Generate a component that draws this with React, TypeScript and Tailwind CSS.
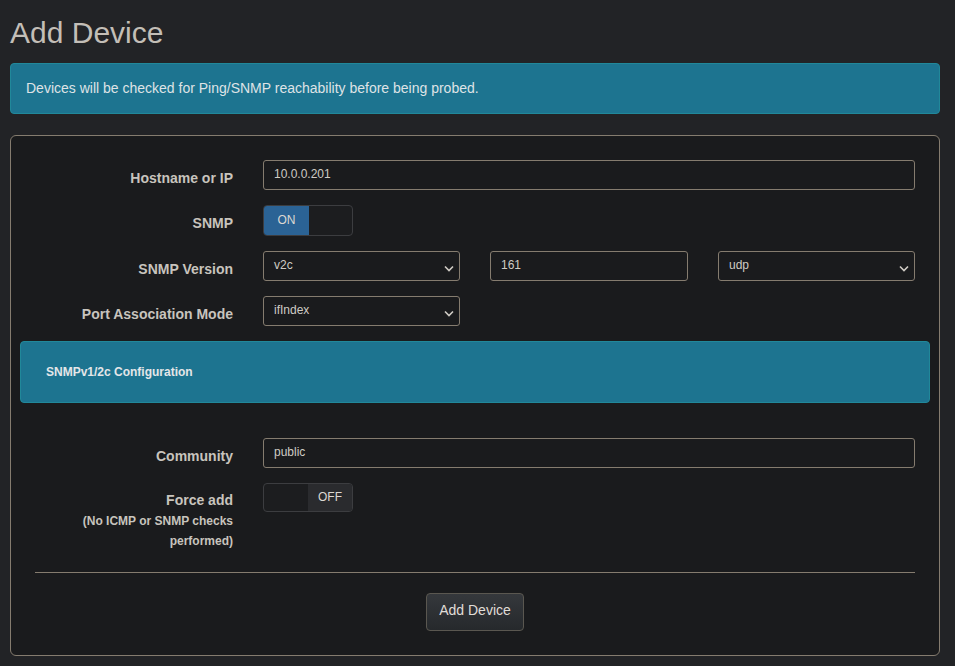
import React from "react";

const font = { fontFamily: '"Liberation Sans", Arial, Helvetica, sans-serif' };

function Chevron() {
  return (
    <svg width="10" height="7" viewBox="0 0 10 7" className="shrink-0">
      <path d="M1 1.5 L5 5.5 L9 1.5" fill="none" stroke="#d0ccc5" strokeWidth="1.6" />
    </svg>
  );
}

function TextBox({ value }: { value: string }) {
  return (
    <div className="h-[30px] w-full rounded-[3px] border border-[#857c6f] bg-[#1a1b1d] pl-[10px] pt-[3px] text-[12px] leading-[20px] text-[#cfcbc4]">
      {value}
    </div>
  );
}

function SelectBox({ value }: { value: string }) {
  return (
    <div className="flex h-[30px] w-full items-start justify-between rounded-[3px] border border-[#857c6f] bg-[#1a1b1d] pl-[10px] pr-[5px] pt-[3px] text-[12px] leading-[20px] text-[#cfcbc4]">
      <span>{value}</span>
      <span className="pt-[10px]">
        <Chevron />
      </span>
    </div>
  );
}

function Toggle({ on, h }: { on: boolean; h: string }) {
  return (
    <div className={`flex ${h} w-[90px] overflow-hidden rounded-[4px] border border-[#3c3d40] bg-[#1c1d1f] text-[12px] text-[#dcd8d2]`}>
      {on ? (
        <>
          <div className="flex w-[45px] items-center justify-center bg-[#2b6395] pb-[2px]">ON</div>
          <div className="flex-1" />
        </>
      ) : (
        <>
          <div className="w-[44px]" />
          <div className="flex flex-1 items-center justify-center bg-[#2a2b2e] pb-[2px]">OFF</div>
        </>
      )}
    </div>
  );
}

function Row({
  label,
  children,
  className = "",
  labelPad = "pt-[8px]",
}: {
  label: React.ReactNode;
  children: React.ReactNode;
  className?: string;
  labelPad?: string;
}) {
  return (
    <div className={`flex ${className}`}>
      <div className={`w-[228px] shrink-0 pr-[15px] ${labelPad} text-right text-[14px] font-bold leading-[20px] text-[#c8c4bd]`}>
        {label}
      </div>
      <div className="flex-1 px-[15px]">{children}</div>
    </div>
  );
}

export default function App() {
  return (
    <div className="min-h-[666px] bg-[#222326] pl-[10px] pr-[15px] pt-[16px]" style={font}>
      <h1 className="text-[30px] leading-[33px] text-[#c3beb7]">Add Device</h1>

      <div className="mt-[14px] flex h-[51px] items-center rounded-[4px] border border-[#21889a] bg-[#1d7490] px-[15px] text-[14px] text-[#dfe3e6]">
        Devices will be checked for Ping/SNMP reachability before being probed.
      </div>

      <div className="mt-[21px] h-[521px] rounded-[6px] border border-[#857c6f] bg-[#1a1b1d] px-[9px] pt-[24px]">
        <Row label="Hostname or IP">
          <TextBox value="10.0.0.201" />
        </Row>

        <Row label="SNMP" className="mt-[15px]">
          <Toggle on h="h-[31px]" />
        </Row>

        <Row label="SNMP Version" className="mt-[15px]">
          <div className="flex">
            <div className="w-[197px]">
              <SelectBox value="v2c" />
            </div>
            <div className="ml-[30px] w-[198px]">
              <TextBox value="161" />
            </div>
            <div className="ml-[30px] flex-1">
              <SelectBox value="udp" />
            </div>
          </div>
        </Row>

        <Row label="Port Association Mode" className="mt-[15px]">
          <div className="w-[197px]">
            <SelectBox value="ifIndex" />
          </div>
        </Row>

        <div className="mt-[15px] flex h-[62px] items-center rounded-[4px] border border-[#21889a] bg-[#1d7490] px-[25px] text-[12px] font-bold text-[#e4e6e8]">
          SNMPv1/2c Configuration
        </div>

        <Row label="Community" className="mt-[35px]">
          <TextBox value="public" />
        </Row>

        <Row
          label={
            <>
              <div>Force add</div>
              <div className="mt-[1px] text-[12px]">(No ICMP or SNMP checks</div>
              <div className="text-[12px]">performed)</div>
            </>
          }
          className="mt-[15px]"
          labelPad="pt-[7px]"
        >
          <Toggle on={false} h="h-[29px]" />
        </Row>

        <div className="mx-[15px] mt-[21px] border-t border-[#857c6f]" />

        <div className="mt-[20px] flex justify-center">
          <button className="h-[38px] w-[98px] rounded-[4px] border border-[#5a5750] bg-gradient-to-b from-[#35383c] to-[#26292c] pb-[3px] text-[14px] text-[#e0ddd8]">
            Add Device
          </button>
        </div>
      </div>
    </div>
  );
}
